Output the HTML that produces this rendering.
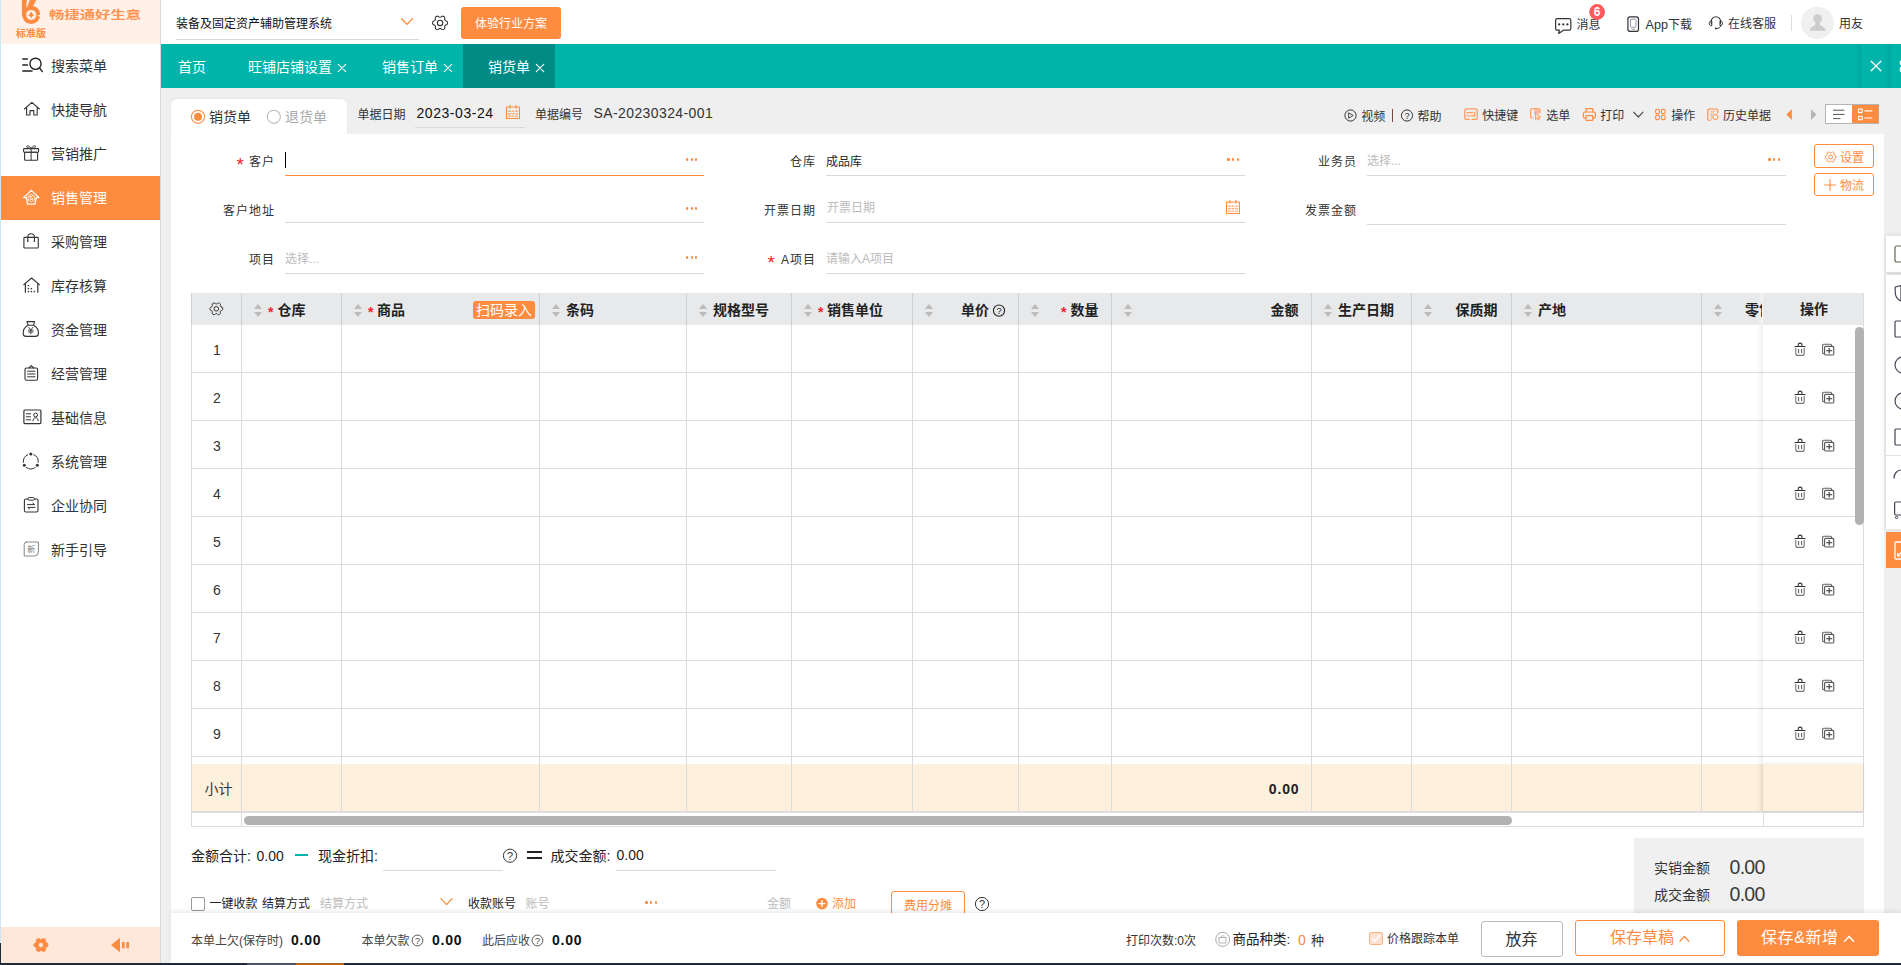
<!DOCTYPE html>
<html lang="zh-CN"><head><meta charset="utf-8"><title>销货单</title>
<style>
*{box-sizing:border-box;margin:0;padding:0}
html,body{width:1901px;height:965px;overflow:hidden;background:#efefef}
body{font-family:"Liberation Sans","Noto Sans CJK SC",sans-serif;font-size:12px;color:#333;position:relative}
.a{position:absolute}
.t{position:absolute;white-space:nowrap;line-height:20px;height:20px}
.r{text-align:right}
.o{color:#fd8b40}
.g{color:#bbb}
svg{position:absolute;overflow:visible}
</style></head>
<body>
<div class="a" style="left:0px;top:0px;width:161px;height:965px;background:#fff;border-right:1px solid #d9d9d9;"></div>
<div class="a" style="left:0px;top:0px;width:160px;height:44px;background:#fff0e8;"></div>
<div class="a" style="left:0px;top:0px;width:1px;height:963px;background:#cfe6f7;"></div>
<div class="t " style="top:5px;font-size:11.5px;left:48.8px;color:#ff9555;font-weight:bold;transform:scaleX(1.335);transform-origin:0 50%;">畅捷通好生意</div>
<div class="t " style="top:24px;font-size:10px;left:16px;color:#fd8b40;font-weight:bold;">标准版</div>
<div class="t " style="top:56px;font-size:14px;left:51px;color:#333;">搜索菜单</div>
<div class="t " style="top:100px;font-size:14px;left:51px;color:#333;">快捷导航</div>
<div class="t " style="top:144px;font-size:14px;left:51px;color:#333;">营销推广</div>
<div class="a" style="left:1px;top:176px;width:159px;height:44px;background:#fd8b40;"></div>
<div class="t " style="top:188px;font-size:14px;left:51px;color:#fff;">销售管理</div>
<div class="t " style="top:232px;font-size:14px;left:51px;color:#333;">采购管理</div>
<div class="t " style="top:276px;font-size:14px;left:51px;color:#333;">库存核算</div>
<div class="t " style="top:320px;font-size:14px;left:51px;color:#333;">资金管理</div>
<div class="t " style="top:364px;font-size:14px;left:51px;color:#333;">经营管理</div>
<div class="t " style="top:408px;font-size:14px;left:51px;color:#333;">基础信息</div>
<div class="t " style="top:452px;font-size:14px;left:51px;color:#333;">系统管理</div>
<div class="t " style="top:496px;font-size:14px;left:51px;color:#333;">企业协同</div>
<div class="t " style="top:540px;font-size:14px;left:51px;color:#333;">新手引导</div>
<div class="a" style="left:1px;top:927px;width:159px;height:36px;background:#ffe7da;"></div>
<div class="a" style="left:0px;top:943px;width:1px;height:22px;background:#1f2a38;"></div>
<div class="a" style="left:161px;top:0px;width:1740px;height:44px;background:#fff;"></div>
<div class="t " style="top:14px;font-size:12px;left:176px;color:#111;">装备及固定资产辅助管理系统</div>
<div class="a" style="left:176px;top:39px;width:243px;height:1px;background:#d9d9d9;"></div>
<div class="a" style="left:461px;top:7px;width:100px;height:32px;background:#fd8b40;border-radius:3px;"></div>
<div class="t " style="top:14px;font-size:12px;left:475px;color:#fff;">体验行业方案</div>
<div class="t " style="top:15px;font-size:12px;left:1576.5px;color:#333;">消息</div>
<div class="t " style="top:15px;font-size:12px;left:1645.5px;color:#333;"><span style="font-size:12.6px">App</span>下载</div>
<div class="t " style="top:14px;font-size:12px;left:1728px;color:#333;">在线客服</div>
<div class="a" style="left:1791px;top:15px;width:1px;height:16px;background:#ddd;"></div>
<div class="a" style="left:1801px;top:7px;width:32px;height:32px;background:#efefef;border-radius:50%;"></div>
<div class="t " style="top:14px;font-size:12px;left:1839px;color:#333;">用友</div>
<div class="a" style="left:161px;top:44px;width:1740px;height:44px;background:#00b4a9;"></div>
<div class="a" style="left:463px;top:44px;width:92px;height:44px;background:#008c84;"></div>
<div class="a" style="left:1854px;top:44px;width:6.5px;height:44px;background:linear-gradient(90deg,rgba(0,0,0,0),rgba(0,0,0,.07));"></div>
<div class="a" style="left:1884px;top:44px;width:6.5px;height:44px;background:linear-gradient(90deg,rgba(0,0,0,0),rgba(0,0,0,.07));"></div>
<div class="t " style="top:57px;font-size:14px;left:178px;color:#fff;">首页</div>
<div class="t " style="top:57px;font-size:14px;left:248px;color:#fff;">旺铺店铺设置</div>
<div class="t " style="top:57px;font-size:14px;left:382px;color:#fff;">销售订单</div>
<div class="t " style="top:57px;font-size:14px;left:488px;color:#fff;">销货单</div>
<div class="a" style="left:171px;top:98.5px;width:176px;height:40px;background:#fff;border-radius:6px 6px 0 0;box-shadow:0 -1px 2px rgba(0,0,0,.04);"></div>
<div class="a" style="left:171px;top:134px;width:1713px;height:800px;background:#fff;"></div>
<div class="t " style="top:107px;font-size:14px;left:209px;color:#333;">销货单</div>
<div class="t " style="top:107px;font-size:14px;left:285px;color:#aaa;">退货单</div>
<div class="t " style="top:104.5px;font-size:12px;left:357.5px;color:#333;">单据日期</div>
<div class="t " style="top:102.5px;font-size:14px;left:416.5px;color:#111;letter-spacing:.55px;">2023-03-24</div>
<div class="a" style="left:415px;top:127px;width:110px;height:1px;background:#d9d9d9;"></div>
<div class="t " style="top:104.5px;font-size:12px;left:535px;color:#333;">单据编号</div>
<div class="t " style="top:102.5px;font-size:14px;left:593.5px;color:#333;letter-spacing:.4px;">SA-20230324-001</div>
<div class="t " style="top:106.5px;font-size:12px;left:1361.3px;color:#333;">视频</div>
<div class="t " style="top:106.5px;font-size:12px;left:1417.6px;color:#333;">帮助</div>
<div class="t " style="top:105.5px;font-size:12px;left:1482.3px;color:#333;">快捷键</div>
<div class="t " style="top:105.5px;font-size:12px;left:1546.3px;color:#333;">选单</div>
<div class="t " style="top:105.5px;font-size:12px;left:1600.3px;color:#333;">打印</div>
<div class="t " style="top:105.5px;font-size:12px;left:1671.2px;color:#333;">操作</div>
<div class="t " style="top:105.5px;font-size:12px;left:1723px;color:#333;">历史单据</div>
<div class="t " style="top:152px;font-size:12px;right:1626px;color:#333;letter-spacing:1px;">客户</div><div class="t " style="top:155.3px;font-size:19px;left:236.5px;color:#f5222d;">*</div>
<div class="a" style="left:285px;top:175px;width:419px;height:1px;background:#fd8b40;"></div>
<div class="a" style="left:285px;top:152px;width:1px;height:16px;background:#000;"></div>
<div class="t " style="top:152px;font-size:12px;right:1085px;color:#333;letter-spacing:1px;">仓库</div>
<div class="a" style="left:826px;top:175px;width:419px;height:1px;background:#d9d9d9;"></div>
<div class="t " style="top:151.5px;font-size:12px;left:826px;color:#222;">成品库</div>
<div class="t " style="top:152px;font-size:12px;right:544px;color:#333;letter-spacing:1px;">业务员</div>
<div class="a" style="left:1367px;top:175px;width:419px;height:1px;background:#d9d9d9;"></div>
<div class="t " style="top:151.2px;font-size:12px;left:1367px;color:#bbb;">选择...</div>
<div class="t " style="top:201px;font-size:12px;right:1626px;color:#333;letter-spacing:1px;">客户地址</div>
<div class="a" style="left:285px;top:222px;width:419px;height:1px;background:#d9d9d9;"></div>
<div class="t " style="top:201px;font-size:12px;right:1085px;color:#333;letter-spacing:1px;">开票日期</div>
<div class="a" style="left:826px;top:222px;width:419px;height:1px;background:#d9d9d9;"></div>
<div class="t " style="top:198px;font-size:12px;left:827px;color:#bbb;">开票日期</div>
<div class="t " style="top:201px;font-size:12px;right:544px;color:#333;letter-spacing:1px;">发票金额</div>
<div class="a" style="left:1367px;top:224px;width:419px;height:1px;background:#d9d9d9;"></div>
<div class="t " style="top:250px;font-size:12px;right:1626px;color:#333;letter-spacing:1px;">项目</div>
<div class="a" style="left:285px;top:273px;width:419px;height:1px;background:#d9d9d9;"></div>
<div class="t " style="top:248.5px;font-size:12px;left:285px;color:#bbb;">选择...</div>
<div class="t " style="top:250px;font-size:12px;right:1085px;color:#333;letter-spacing:1px;">A项目</div><div class="t " style="top:253.3px;font-size:19px;left:767.6px;color:#f5222d;">*</div>
<div class="a" style="left:826px;top:273px;width:419px;height:1px;background:#d9d9d9;"></div>
<div class="t " style="top:248.5px;font-size:12px;left:826px;color:#bbb;">请输入A项目</div>
<div class="a" style="left:685.9px;top:158.4px;width:2.2px;height:2.2px;background:#fd8b40;border-radius:1.1px;"></div><div class="a" style="left:690.5px;top:158.4px;width:2.2px;height:2.2px;background:#fd8b40;border-radius:1.1px;"></div><div class="a" style="left:695.1px;top:158.4px;width:2.2px;height:2.2px;background:#fd8b40;border-radius:1.1px;"></div>
<div class="a" style="left:1227.4px;top:158.4px;width:2.2px;height:2.2px;background:#fd8b40;border-radius:1.1px;"></div><div class="a" style="left:1232px;top:158.4px;width:2.2px;height:2.2px;background:#fd8b40;border-radius:1.1px;"></div><div class="a" style="left:1236.6px;top:158.4px;width:2.2px;height:2.2px;background:#fd8b40;border-radius:1.1px;"></div>
<div class="a" style="left:1768.4px;top:158.4px;width:2.2px;height:2.2px;background:#fd8b40;border-radius:1.1px;"></div><div class="a" style="left:1773px;top:158.4px;width:2.2px;height:2.2px;background:#fd8b40;border-radius:1.1px;"></div><div class="a" style="left:1777.6px;top:158.4px;width:2.2px;height:2.2px;background:#fd8b40;border-radius:1.1px;"></div>
<div class="a" style="left:685.9px;top:207.4px;width:2.2px;height:2.2px;background:#fd8b40;border-radius:1.1px;"></div><div class="a" style="left:690.5px;top:207.4px;width:2.2px;height:2.2px;background:#fd8b40;border-radius:1.1px;"></div><div class="a" style="left:695.1px;top:207.4px;width:2.2px;height:2.2px;background:#fd8b40;border-radius:1.1px;"></div>
<div class="a" style="left:685.9px;top:256.4px;width:2.2px;height:2.2px;background:#fd8b40;border-radius:1.1px;"></div><div class="a" style="left:690.5px;top:256.4px;width:2.2px;height:2.2px;background:#fd8b40;border-radius:1.1px;"></div><div class="a" style="left:695.1px;top:256.4px;width:2.2px;height:2.2px;background:#fd8b40;border-radius:1.1px;"></div>
<div class="a" style="left:1814px;top:144px;width:60px;height:24px;background:#fff;border:1px solid #fd8b40;border-radius:3px;"></div>
<div class="t " style="top:148px;font-size:12px;left:1840px;color:#fd8b40;">设置</div>
<div class="a" style="left:1814px;top:172.5px;width:60px;height:23.5px;background:#fff;border:1px solid #fd8b40;border-radius:3px;"></div>
<div class="t " style="top:176.2px;font-size:12px;left:1840px;color:#fd8b40;">物流</div>
<div class="a" style="left:191px;top:293px;width:1673px;height:32px;background:#e8e9eb;"></div>
<div class="a" style="left:191px;top:372px;width:1673px;height:1px;background:#dcdcdc;"></div>
<div class="a" style="left:191px;top:420px;width:1673px;height:1px;background:#dcdcdc;"></div>
<div class="a" style="left:191px;top:468px;width:1673px;height:1px;background:#dcdcdc;"></div>
<div class="a" style="left:191px;top:516px;width:1673px;height:1px;background:#dcdcdc;"></div>
<div class="a" style="left:191px;top:564px;width:1673px;height:1px;background:#dcdcdc;"></div>
<div class="a" style="left:191px;top:612px;width:1673px;height:1px;background:#dcdcdc;"></div>
<div class="a" style="left:191px;top:660px;width:1673px;height:1px;background:#dcdcdc;"></div>
<div class="a" style="left:191px;top:708px;width:1673px;height:1px;background:#dcdcdc;"></div>
<div class="a" style="left:191px;top:756px;width:1673px;height:1px;background:#dcdcdc;"></div>
<div class="a" style="left:191px;top:764px;width:1673px;height:47px;background:#fdf0dc;"></div>
<div class="a" style="left:191px;top:811px;width:1673px;height:2px;background:#dedede;"></div>
<div class="a" style="left:191px;top:826px;width:1673px;height:1px;background:#dcdcdc;"></div>
<div class="a" style="left:191px;top:293px;width:1px;height:32px;background:#cfcfcf;"></div>
<div class="a" style="left:191px;top:325px;width:1px;height:502px;background:#dcdcdc;"></div>
<div class="a" style="left:241px;top:293px;width:1px;height:32px;background:#cfcfcf;"></div>
<div class="a" style="left:241px;top:325px;width:1px;height:502px;background:#dcdcdc;"></div>
<div class="a" style="left:341px;top:293px;width:1px;height:32px;background:#cfcfcf;"></div>
<div class="a" style="left:341px;top:325px;width:1px;height:486px;background:#dcdcdc;"></div>
<div class="a" style="left:539px;top:293px;width:1px;height:32px;background:#cfcfcf;"></div>
<div class="a" style="left:539px;top:325px;width:1px;height:486px;background:#dcdcdc;"></div>
<div class="a" style="left:686px;top:293px;width:1px;height:32px;background:#cfcfcf;"></div>
<div class="a" style="left:686px;top:325px;width:1px;height:486px;background:#dcdcdc;"></div>
<div class="a" style="left:791px;top:293px;width:1px;height:32px;background:#cfcfcf;"></div>
<div class="a" style="left:791px;top:325px;width:1px;height:486px;background:#dcdcdc;"></div>
<div class="a" style="left:912px;top:293px;width:1px;height:32px;background:#cfcfcf;"></div>
<div class="a" style="left:912px;top:325px;width:1px;height:486px;background:#dcdcdc;"></div>
<div class="a" style="left:1018px;top:293px;width:1px;height:32px;background:#cfcfcf;"></div>
<div class="a" style="left:1018px;top:325px;width:1px;height:486px;background:#dcdcdc;"></div>
<div class="a" style="left:1111px;top:293px;width:1px;height:32px;background:#cfcfcf;"></div>
<div class="a" style="left:1111px;top:325px;width:1px;height:486px;background:#dcdcdc;"></div>
<div class="a" style="left:1311px;top:293px;width:1px;height:32px;background:#cfcfcf;"></div>
<div class="a" style="left:1311px;top:325px;width:1px;height:486px;background:#dcdcdc;"></div>
<div class="a" style="left:1411px;top:293px;width:1px;height:32px;background:#cfcfcf;"></div>
<div class="a" style="left:1411px;top:325px;width:1px;height:486px;background:#dcdcdc;"></div>
<div class="a" style="left:1511px;top:293px;width:1px;height:32px;background:#cfcfcf;"></div>
<div class="a" style="left:1511px;top:325px;width:1px;height:486px;background:#dcdcdc;"></div>
<div class="a" style="left:1701px;top:293px;width:1px;height:32px;background:#cfcfcf;"></div>
<div class="a" style="left:1701px;top:325px;width:1px;height:486px;background:#dcdcdc;"></div>
<div class="a" style="left:241px;top:811px;width:1px;height:15px;background:#dcdcdc;"></div>
<div class="a" style="left:1863px;top:293px;width:1px;height:534px;background:#dcdcdc;"></div>
<div class="a" style="left:1763px;top:293px;width:100px;height:32px;background:#e8e9eb;"></div>
<div class="a" style="left:1758px;top:293px;width:5px;height:32px;background:linear-gradient(90deg,rgba(255,255,255,0),rgba(255,255,255,.55));"></div>
<div class="a" style="left:1757px;top:325px;width:6px;height:486px;background:linear-gradient(90deg,rgba(0,0,0,0),rgba(0,0,0,.06));"></div>
<div class="a" style="left:1763px;top:325px;width:100px;height:439px;background:#fff;"></div>
<div class="a" style="left:1763px;top:764px;width:100px;height:47px;background:#fdf0dc;box-shadow:0 0 3px rgba(0,0,0,.12);"></div>
<div class="a" style="left:1763px;top:812px;width:1px;height:14px;background:#dcdcdc;"></div>
<div class="a" style="left:1763px;top:372px;width:100px;height:1px;background:#dcdcdc;"></div>
<div class="a" style="left:1763px;top:420px;width:100px;height:1px;background:#dcdcdc;"></div>
<div class="a" style="left:1763px;top:468px;width:100px;height:1px;background:#dcdcdc;"></div>
<div class="a" style="left:1763px;top:516px;width:100px;height:1px;background:#dcdcdc;"></div>
<div class="a" style="left:1763px;top:564px;width:100px;height:1px;background:#dcdcdc;"></div>
<div class="a" style="left:1763px;top:612px;width:100px;height:1px;background:#dcdcdc;"></div>
<div class="a" style="left:1763px;top:660px;width:100px;height:1px;background:#dcdcdc;"></div>
<div class="a" style="left:1763px;top:708px;width:100px;height:1px;background:#dcdcdc;"></div>
<div class="a" style="left:1763px;top:756px;width:100px;height:1px;background:#dcdcdc;"></div>
<div class="a" style="left:254px;top:304px;border:4px solid transparent;border-top:0;border-bottom:5px solid #bbb"></div><div class="a" style="left:254px;top:312px;border:4px solid transparent;border-bottom:0;border-top:5px solid #bbb"></div>
<div class="a" style="left:354px;top:304px;border:4px solid transparent;border-top:0;border-bottom:5px solid #bbb"></div><div class="a" style="left:354px;top:312px;border:4px solid transparent;border-bottom:0;border-top:5px solid #bbb"></div>
<div class="a" style="left:552px;top:304px;border:4px solid transparent;border-top:0;border-bottom:5px solid #bbb"></div><div class="a" style="left:552px;top:312px;border:4px solid transparent;border-bottom:0;border-top:5px solid #bbb"></div>
<div class="a" style="left:698.5px;top:304px;border:4px solid transparent;border-top:0;border-bottom:5px solid #bbb"></div><div class="a" style="left:698.5px;top:312px;border:4px solid transparent;border-bottom:0;border-top:5px solid #bbb"></div>
<div class="a" style="left:804px;top:304px;border:4px solid transparent;border-top:0;border-bottom:5px solid #bbb"></div><div class="a" style="left:804px;top:312px;border:4px solid transparent;border-bottom:0;border-top:5px solid #bbb"></div>
<div class="a" style="left:925px;top:304px;border:4px solid transparent;border-top:0;border-bottom:5px solid #bbb"></div><div class="a" style="left:925px;top:312px;border:4px solid transparent;border-bottom:0;border-top:5px solid #bbb"></div>
<div class="a" style="left:1031px;top:304px;border:4px solid transparent;border-top:0;border-bottom:5px solid #bbb"></div><div class="a" style="left:1031px;top:312px;border:4px solid transparent;border-bottom:0;border-top:5px solid #bbb"></div>
<div class="a" style="left:1124px;top:304px;border:4px solid transparent;border-top:0;border-bottom:5px solid #bbb"></div><div class="a" style="left:1124px;top:312px;border:4px solid transparent;border-bottom:0;border-top:5px solid #bbb"></div>
<div class="a" style="left:1324px;top:304px;border:4px solid transparent;border-top:0;border-bottom:5px solid #bbb"></div><div class="a" style="left:1324px;top:312px;border:4px solid transparent;border-bottom:0;border-top:5px solid #bbb"></div>
<div class="a" style="left:1424px;top:304px;border:4px solid transparent;border-top:0;border-bottom:5px solid #bbb"></div><div class="a" style="left:1424px;top:312px;border:4px solid transparent;border-bottom:0;border-top:5px solid #bbb"></div>
<div class="a" style="left:1524px;top:304px;border:4px solid transparent;border-top:0;border-bottom:5px solid #bbb"></div><div class="a" style="left:1524px;top:312px;border:4px solid transparent;border-bottom:0;border-top:5px solid #bbb"></div>
<div class="a" style="left:1714px;top:304px;border:4px solid transparent;border-top:0;border-bottom:5px solid #bbb"></div><div class="a" style="left:1714px;top:312px;border:4px solid transparent;border-bottom:0;border-top:5px solid #bbb"></div>
<div class="t " style="top:302px;font-size:14px;left:268px;color:#f5222d;font-weight:bold;">*</div>
<div class="t " style="top:300px;font-size:14px;left:277.5px;color:#222;font-weight:bold;">仓库</div>
<div class="t " style="top:302px;font-size:14px;left:368px;color:#f5222d;font-weight:bold;">*</div>
<div class="t " style="top:300px;font-size:14px;left:377px;color:#222;font-weight:bold;">商品</div>
<div class="a" style="left:473px;top:301px;width:62px;height:18px;background:#fd8b40;border-radius:3px;"></div>
<div class="t " style="top:300px;font-size:14px;left:476px;color:#fff;">扫码录入</div>
<div class="t " style="top:300px;font-size:14px;left:566px;color:#222;font-weight:bold;">条码</div>
<div class="t " style="top:300px;font-size:14px;left:713px;color:#222;font-weight:bold;">规格型号</div>
<div class="t " style="top:302px;font-size:14px;left:818px;color:#f5222d;font-weight:bold;">*</div>
<div class="t " style="top:300px;font-size:14px;left:827px;color:#222;font-weight:bold;">销售单位</div>
<div class="t " style="top:300px;font-size:14px;right:912px;color:#222;font-weight:bold;">单价</div>
<div class="t " style="top:302px;font-size:14px;left:1061px;color:#f5222d;font-weight:bold;">*</div>
<div class="t " style="top:300px;font-size:14px;right:802.5px;color:#222;font-weight:bold;">数量</div>
<div class="t " style="top:300px;font-size:14px;right:602.5px;color:#222;font-weight:bold;">金额</div>
<div class="t " style="top:300px;font-size:14px;left:1338px;color:#222;font-weight:bold;">生产日期</div>
<div class="t " style="top:300px;font-size:14px;right:403.5px;color:#222;font-weight:bold;">保质期</div>
<div class="t " style="top:300px;font-size:14px;left:1538px;color:#222;font-weight:bold;">产地</div>
<div class="a" style="left:1745px;top:300px;width:17px;height:20px;overflow:hidden"><div class="t " style="top:0px;font-size:14px;left:0px;color:#222;font-weight:bold;">零售价</div></div>
<div class="t " style="top:299px;font-size:14px;left:1800px;color:#222;font-weight:bold;">操作</div>
<div class="t " style="top:339.5px;font-size:14px;left:207px;color:#333;width:20px;text-align:center;">1</div>
<div class="t " style="top:387.5px;font-size:14px;left:207px;color:#333;width:20px;text-align:center;">2</div>
<div class="t " style="top:435.5px;font-size:14px;left:207px;color:#333;width:20px;text-align:center;">3</div>
<div class="t " style="top:483.5px;font-size:14px;left:207px;color:#333;width:20px;text-align:center;">4</div>
<div class="t " style="top:531.5px;font-size:14px;left:207px;color:#333;width:20px;text-align:center;">5</div>
<div class="t " style="top:579.5px;font-size:14px;left:207px;color:#333;width:20px;text-align:center;">6</div>
<div class="t " style="top:627.5px;font-size:14px;left:207px;color:#333;width:20px;text-align:center;">7</div>
<div class="t " style="top:675.5px;font-size:14px;left:207px;color:#333;width:20px;text-align:center;">8</div>
<div class="t " style="top:723.5px;font-size:14px;left:207px;color:#333;width:20px;text-align:center;">9</div>
<div class="t " style="top:779px;font-size:14px;left:204.5px;color:#333;">小计</div>
<div class="t " style="top:778.5px;font-size:14px;right:601.7px;color:#222;font-weight:bold;letter-spacing:.8px;">0.00</div>
<div class="a" style="left:1855px;top:327px;width:9px;height:198px;background:#b2b2b2;border-radius:5px;"></div>
<div class="a" style="left:244px;top:816px;width:1268px;height:9px;background:#b2b2b2;border-radius:5px;"></div>
<div class="t " style="top:846px;font-size:14px;left:191px;color:#222;">金额合计:</div>
<div class="t " style="top:845.5px;font-size:14px;left:256.5px;color:#222;">0.00</div>
<div class="a" style="left:294.5px;top:854px;width:13.5px;height:2px;background:#00b4a9;"></div>
<div class="t " style="top:846px;font-size:14px;left:318px;color:#222;">现金折扣:</div>
<div class="a" style="left:383px;top:870px;width:120px;height:1px;background:#d9d9d9;"></div>
<div class="a" style="left:527px;top:851px;width:14.5px;height:2px;background:#222;"></div>
<div class="a" style="left:527px;top:857px;width:14.5px;height:2px;background:#222;"></div>
<div class="t " style="top:846px;font-size:14px;left:550.5px;color:#222;">成交金额:</div>
<div class="t " style="top:844.5px;font-size:14px;left:616.5px;color:#222;">0.00</div>
<div class="a" style="left:616px;top:870px;width:160px;height:1px;background:#d9d9d9;"></div>
<div class="a" style="left:191px;top:897px;width:13.5px;height:13.5px;background:#fff;border:1px solid #999;border-radius:2px;"></div>
<div class="t " style="top:894px;font-size:12px;left:209.5px;color:#222;">一键收款</div>
<div class="t " style="top:894px;font-size:12px;left:262px;color:#222;">结算方式</div>
<div class="t " style="top:894px;font-size:12px;left:320px;color:#bbb;">结算方式</div>
<div class="t " style="top:894px;font-size:12px;left:468px;color:#222;">收款账号</div>
<div class="t " style="top:894px;font-size:12px;left:525.5px;color:#bbb;">账号</div>
<div class="a" style="left:645.4px;top:901.4px;width:2.2px;height:2.2px;background:#fd8b40;border-radius:1.1px;"></div><div class="a" style="left:650px;top:901.4px;width:2.2px;height:2.2px;background:#fd8b40;border-radius:1.1px;"></div><div class="a" style="left:654.6px;top:901.4px;width:2.2px;height:2.2px;background:#fd8b40;border-radius:1.1px;"></div>
<div class="t " style="top:894px;font-size:12px;left:767px;color:#bbb;">金额</div>
<div class="t " style="top:894px;font-size:12px;left:832px;color:#fd8b40;">添加</div>
<div class="a" style="left:891px;top:890.7px;width:74px;height:30px;background:#fff;border:1px solid #fd8b40;border-radius:3px;"></div>
<div class="t " style="top:895.5px;font-size:12px;left:904px;color:#fd8b40;">费用分摊</div>
<div class="a" style="left:1634px;top:838px;width:230px;height:80px;background:#f0f0f0;"></div>
<div class="t " style="top:858px;font-size:14px;left:1654px;color:#333;">实销金额</div>
<div class="t " style="top:856.5px;font-size:19.5px;left:1729.5px;color:#3a3a3a;letter-spacing:-.7px;">0.00</div>
<div class="t " style="top:885px;font-size:14px;left:1654px;color:#333;">成交金额</div>
<div class="t " style="top:883.5px;font-size:19.5px;left:1729.5px;color:#3a3a3a;letter-spacing:-.7px;">0.00</div>
<div class="a" style="left:171px;top:913px;width:1730px;height:50px;background:#fff;box-shadow:0 -2px 4px rgba(0,0,0,.08);"></div>
<div class="t " style="top:930.5px;font-size:12px;left:191px;color:#444;">本单上欠(保存时)</div>
<div class="t " style="top:930px;font-size:14px;left:291px;color:#111;font-weight:bold;letter-spacing:.8px;">0.00</div>
<div class="t " style="top:930.5px;font-size:12px;left:361.5px;color:#444;">本单欠款</div>
<div class="t " style="top:930px;font-size:14px;left:432px;color:#111;font-weight:bold;letter-spacing:.8px;">0.00</div>
<div class="t " style="top:930.5px;font-size:12px;left:482px;color:#444;">此后应收</div>
<div class="t " style="top:930px;font-size:14px;left:552px;color:#111;font-weight:bold;letter-spacing:.8px;">0.00</div>
<div class="t " style="top:930.5px;font-size:12px;left:1126px;color:#333;">打印次数:0次</div>
<div class="t " style="top:929.5px;font-size:13.5px;left:1232.5px;color:#222;">商品种类:</div>
<div class="t " style="top:929.5px;font-size:14px;left:1298px;color:#fd8b40;">0</div>
<div class="t " style="top:930.5px;font-size:13px;left:1311px;color:#333;">种</div>
<div class="a" style="left:1369px;top:931.5px;width:13.5px;height:13.5px;background:#ffdfcd;border:1px solid #f7b48c;border-radius:2px;"></div>
<div class="t " style="top:928.5px;font-size:12px;left:1387px;color:#333;">价格跟踪本单</div>
<div class="a" style="left:1481px;top:921px;width:82px;height:36px;background:#fff;border:1px solid #bbb;border-radius:3px;"></div>
<div class="t " style="top:929.5px;font-size:16px;left:1505.5px;color:#333;">放弃</div>
<div class="a" style="left:1575px;top:920px;width:150px;height:36px;background:#fff;border:1px solid #fd8b40;border-radius:3px;"></div>
<div class="t " style="top:928px;font-size:16px;left:1610px;color:#fd8b40;">保存草稿</div>
<div class="a" style="left:1737px;top:920px;width:142px;height:36px;background:#fd8b40;border-radius:3px;"></div>
<div class="t " style="top:928px;font-size:16px;left:1761px;color:#fff;letter-spacing:.6px;">保存&amp;新增</div>
<div class="a" style="left:1886px;top:236px;width:20px;height:36px;background:#fff;box-shadow:0 0 6px rgba(0,0,0,.12);"></div>
<div class="a" style="left:1886px;top:275px;width:20px;height:254px;background:#fff;box-shadow:0 0 6px rgba(0,0,0,.12);"></div>
<div class="a" style="left:1886px;top:455px;width:20px;height:1px;background:#e2e2e2;"></div>
<div class="a" style="left:1886px;top:532px;width:20px;height:36px;background:#fd8b40;"></div>
<div class="a" style="left:0px;top:963px;width:1901px;height:2px;background:#1f2a38;"></div>
<div class="a" style="left:247px;top:963px;width:49px;height:2px;background:#4b5563;"></div>
<div class="a" style="left:296px;top:963px;width:48px;height:2px;background:#b5651d;"></div>
<svg class="a" style="left:0;top:0" width="1901" height="965" viewBox="0 0 1901 965"><circle cx="31.2" cy="14.8" r="9.1" fill="#fd8b40" stroke="#fd8b40" stroke-width="0"/>
<path d="M21.9 0 H26.9 L26.3 6 V15 H21.9 Z" fill="#fd8b40" stroke="#fd8b40" stroke-width="0" stroke-linecap="round" stroke-linejoin="round" />
<path d="M29.8 0 H36.3 L32.9 6.4 L26.6 9 Z" fill="#fd8b40" stroke="#fd8b40" stroke-width="0" stroke-linecap="round" stroke-linejoin="round" />
<circle cx="31.2" cy="14.9" r="5" fill="#fff0e8" stroke="#fff0e8" stroke-width="0"/>
<path d="M40.6 14.4 L37.2 15.7 L40.6 17 Z" fill="#fff0e8" stroke="#fff0e8" stroke-width="0" stroke-linecap="round" stroke-linejoin="round" />
<path d="M31.2 11.6 Q31.9 14.2 34.4 14.9 Q31.9 15.6 31.2 18.2 Q30.5 15.6 28 14.9 Q30.5 14.2 31.2 11.6 Z" fill="#fd8b40" stroke="#fd8b40" stroke-width="0" stroke-linecap="round" stroke-linejoin="round" />
<path d="M22.8 59 h4.6 M22.8 65 h4.6 M22.8 71 h9.2" fill="none" stroke="#222" stroke-width="1.5" stroke-linecap="round" stroke-linejoin="round" stroke-linecap="butt"/>
<circle cx="35.5" cy="63.8" r="5.6" fill="none" stroke="#222" stroke-width="1.4"/>
<path d="M39.6 68 L42.4 71.6" fill="none" stroke="#222" stroke-width="1.4" stroke-linecap="round" stroke-linejoin="round" />
<path d="M24.4 109 L31.9 102.4 L39.4 109 M26.6 107.6 V115 H30 V110.6 H33.8 V115 H37.2 V107.6" fill="none" stroke="#333" stroke-width="1.1" stroke-linecap="round" stroke-linejoin="round" />
<rect x="24.6" y="152.2" width="13" height="8" rx="0.8" fill="none" stroke="#333" stroke-width="1.1"/>
<rect x="23.6" y="148.6" width="15" height="3.6" rx="0.6" fill="none" stroke="#333" stroke-width="1.1"/>
<path d="M31.1 148.6 V160" fill="none" stroke="#333" stroke-width="1" stroke-linecap="round" stroke-linejoin="round" />
<path d="M31.1 148.4 C29 145 25.6 145.2 27 147.4 C27.8 148.3 29.8 148.4 31.1 148.4 C32.4 148.4 34.4 148.3 35.2 147.4 C36.6 145.2 33.2 145 31.1 148.4" fill="none" stroke="#333" stroke-width="1" stroke-linecap="round" stroke-linejoin="round" />
<path d="M31.3 190.4 L23.6 197.6 H26.4 L27.6 204.2 H35 L36.2 197.6 H39 Z" fill="none" stroke="#fff" stroke-width="1.3" stroke-linecap="round" stroke-linejoin="round" />
<circle cx="31.3" cy="198" r="3.5" fill="none" stroke="#fff" stroke-width="0.8"/>
<text x="31.3" y="200.2" font-size="6" fill="#fff" font-weight="bold" text-anchor="middle" font-family="Liberation Sans, Noto Sans CJK SC, sans-serif">S</text>
<rect x="23.9" y="237.4" width="14.4" height="10.6" rx="0.8" fill="none" stroke="#333" stroke-width="1.1"/>
<path d="M27.8 241 V237 A3.3 3.3 0 0 1 34.4 237 V241" fill="none" stroke="#333" stroke-width="1.1" stroke-linecap="round" stroke-linejoin="round" />
<circle cx="27.8" cy="241.2" r="0.7" fill="#333" stroke="#333" stroke-width="0"/>
<circle cx="34.4" cy="241.2" r="0.7" fill="#333" stroke="#333" stroke-width="0"/>
<path d="M23.8 284.6 L31.6 278 L39.4 284.6 M25.4 283.6 V292.2 M37.8 283.6 V292.2" fill="none" stroke="#333" stroke-width="1.2" stroke-linecap="round" stroke-linejoin="round" />
<rect x="27.7" y="284.9" width="1.4" height="1.4" rx="0" fill="#333" stroke="#333" stroke-width="0"/>
<rect x="27.7" y="287.9" width="1.4" height="1.4" rx="0" fill="#333" stroke="#333" stroke-width="0"/>
<rect x="30.7" y="287.9" width="1.4" height="1.4" rx="0" fill="#333" stroke="#333" stroke-width="0"/>
<rect x="27.7" y="290.9" width="1.4" height="1.4" rx="0" fill="#333" stroke="#333" stroke-width="0"/>
<rect x="30.7" y="290.9" width="1.4" height="1.4" rx="0" fill="#333" stroke="#333" stroke-width="0"/>
<rect x="33.7" y="290.9" width="1.4" height="1.4" rx="0" fill="#333" stroke="#333" stroke-width="0"/>
<path d="M28 325.2 L27 321.6 H34.6 L33.6 325.2 C36.8 327 38.6 330.4 38.4 333.6 C38.3 335.6 37.2 336.4 35.4 336.4 H26.2 C24.4 336.4 23.3 335.6 23.2 333.6 C23 330.4 24.8 327 28 325.2 Z M28 325.2 H33.6" fill="none" stroke="#333" stroke-width="1.1" stroke-linecap="round" stroke-linejoin="round" />
<path d="M28.8 327.4 L30.8 330 L32.8 327.4 M28.4 330.2 H33.2 M28.4 332 H33.2 M30.8 330 V334" fill="none" stroke="#333" stroke-width="0.9" stroke-linecap="round" stroke-linejoin="round" />
<rect x="25" y="368" width="12.6" height="12.2" rx="1.4" fill="none" stroke="#333" stroke-width="1.1"/>
<path d="M29 368 L31.3 365.6 L33.6 368" fill="none" stroke="#333" stroke-width="1.1" stroke-linecap="round" stroke-linejoin="round" />
<path d="M27.6 371.2 H35 M27.6 374 H35 M27.6 376.8 H35" fill="none" stroke="#333" stroke-width="1" stroke-linecap="round" stroke-linejoin="round" />
<rect x="23.9" y="410" width="17" height="13.6" rx="1" fill="none" stroke="#333" stroke-width="1.2"/>
<path d="M26.4 413.8 H30.6 M26.4 416.8 H30.6 M26.4 419.8 H30.6" fill="none" stroke="#333" stroke-width="1" stroke-linecap="round" stroke-linejoin="round" />
<circle cx="35.6" cy="415" r="1.9" fill="none" stroke="#333" stroke-width="1"/>
<path d="M33 420.8 C33 416.6 38.2 416.6 38.2 420.8" fill="none" stroke="#333" stroke-width="1" stroke-linecap="round" stroke-linejoin="round" />
<path d="M33.85 454.65 A7.5 7.5 0 0 1 38.26 462.28M35.21 467.57 A7.5 7.5 0 0 1 26.39 467.57M23.34 462.28 A7.5 7.5 0 0 1 27.75 454.65" fill="none" stroke="#333" stroke-width="1" stroke-linecap="round" stroke-linejoin="round" />
<circle cx="30.8" cy="454" r="1.5" fill="#333" stroke="#333" stroke-width="0"/>
<circle cx="24.3" cy="465.25" r="1.5" fill="#333" stroke="#333" stroke-width="0"/>
<circle cx="37.3" cy="465.25" r="1.5" fill="#333" stroke="#333" stroke-width="0"/>
<rect x="24.4" y="499" width="13.6" height="13" rx="1.6" fill="none" stroke="#333" stroke-width="1.1"/>
<rect x="27.8" y="497.6" width="6.8" height="2.6" rx="1.3" fill="#fff" stroke="#333" stroke-width="1"/>
<path d="M27.4 504.6 H34.6 L32.8 503 M35 507.4 H27.8 L29.6 509" fill="none" stroke="#333" stroke-width="1" stroke-linecap="round" stroke-linejoin="round" />
<path d="M26.6 542 H38.4 V552 A4 4 0 0 1 34.4 556 H24.2 V544.4 A2.4 2.4 0 0 1 26.6 542 Z" fill="none" stroke="#888" stroke-width="1" stroke-linecap="round" stroke-linejoin="round" />
<text x="31.3" y="552" font-size="8" fill="#777" font-weight="normal" text-anchor="middle" font-family="Liberation Sans, Noto Sans CJK SC, sans-serif">新</text>
<path d="M47.10 942.90A2.55 2.55 0 0 1 47.10 947.10A1.33 1.33 0 0 0 45.87 949.23A2.55 2.55 0 0 1 42.23 951.33A1.33 1.33 0 0 0 39.77 951.33A2.55 2.55 0 0 1 36.13 949.23A1.33 1.33 0 0 0 34.90 947.10A2.55 2.55 0 0 1 34.90 942.90A1.33 1.33 0 0 0 36.13 940.77A2.55 2.55 0 0 1 39.77 938.67A1.33 1.33 0 0 0 42.23 938.67A2.55 2.55 0 0 1 45.87 940.77A1.33 1.33 0 0 0 47.10 942.90ZM43.50 945.00 A2.50 2.50 0 1 0 38.50 945.00 A2.50 2.50 0 1 0 43.50 945.00 Z" fill="#fd8b40" stroke="#fd8b40" stroke-width="0.6" stroke-linecap="round" stroke-linejoin="round" fill-rule="evenodd"/>
<path d="M111 945 L120 937.8 V952.2 Z" fill="#fd8b40" stroke="#fd8b40" stroke-width="0" stroke-linecap="round" stroke-linejoin="round" />
<rect x="122" y="942" width="2.6" height="6.3" rx="0" fill="#fd8b40" stroke="#fd8b40" stroke-width="0"/>
<rect x="126.3" y="942" width="2.7" height="6.3" rx="0" fill="#fd8b40" stroke="#fd8b40" stroke-width="0"/>
<path d="M401.6 18.8 L407 24.4 L412.4 18.8" fill="none" stroke="#fd8b40" stroke-width="1.3" stroke-linecap="round" stroke-linejoin="round" />
<path d="M446.44 21.04A2.10 2.10 0 0 1 446.44 24.76A1.90 1.90 0 0 0 444.85 27.50A2.10 2.10 0 0 1 441.64 29.36A1.90 1.90 0 0 0 438.46 29.36A2.10 2.10 0 0 1 435.25 27.50A1.90 1.90 0 0 0 433.66 24.76A2.10 2.10 0 0 1 433.66 21.04A1.90 1.90 0 0 0 435.25 18.30A2.10 2.10 0 0 1 438.46 16.44A1.90 1.90 0 0 0 441.64 16.44A2.10 2.10 0 0 1 444.85 18.30A1.90 1.90 0 0 0 446.44 21.04Z" fill="none" stroke="#333" stroke-width="1.1" stroke-linecap="round" stroke-linejoin="round" />
<circle cx="440.05" cy="22.9" r="2.7" fill="none" stroke="#333" stroke-width="1.1"/>
<path d="M1557.2 18.6 H1569.2 A1.6 1.6 0 0 1 1570.8 20.2 V28.6 A1.6 1.6 0 0 1 1569.2 30.2 H1563.4 L1558.8 33.4 L1559.4 30.2 H1557.2 A1.6 1.6 0 0 1 1555.6 28.6 V20.2 A1.6 1.6 0 0 1 1557.2 18.6 Z" fill="none" stroke="#333" stroke-width="1.2" stroke-linecap="round" stroke-linejoin="round" />
<circle cx="1559.2" cy="24.4" r="1.15" fill="#333" stroke="#333" stroke-width="0"/>
<circle cx="1563.3" cy="24.4" r="1.15" fill="#333" stroke="#333" stroke-width="0"/>
<circle cx="1567.4" cy="24.4" r="1.15" fill="#333" stroke="#333" stroke-width="0"/>
<circle cx="1597.1" cy="12" r="7.9" fill="#ff5a5f" stroke="#ff5a5f" stroke-width="0"/>
<text x="1597.1" y="16.3" font-size="12" fill="#fff" font-weight="bold" text-anchor="middle" font-family="Liberation Sans, Noto Sans CJK SC, sans-serif">6</text>
<rect x="1627.9" y="16.8" width="10.6" height="14.6" rx="2.2" fill="none" stroke="#333" stroke-width="1.2"/>
<rect x="1630.4" y="19.2" width="5.6" height="8" rx="0.6" fill="none" stroke="#9a93b5" stroke-width="1"/>
<path d="M1631.8 29.2 H1634.6" fill="none" stroke="#999" stroke-width="1" stroke-linecap="round" stroke-linejoin="round" />
<path d="M1711.2 23.6 V21.4 A4.7 4.7 0 0 1 1720.6 21.4 V23.6" fill="none" stroke="#333" stroke-width="1.1" stroke-linecap="round" stroke-linejoin="round" />
<path d="M1711.4 20.8 C1708.4 20.8 1708.4 25.8 1711.4 25.8 Z M1720.4 20.8 C1723.4 20.8 1723.4 25.8 1720.4 25.8 Z" fill="none" stroke="#333" stroke-width="1" stroke-linecap="round" stroke-linejoin="round" />
<path d="M1720.6 25.8 C1720.6 27.8 1718.6 28.4 1716.6 28.4" fill="none" stroke="#333" stroke-width="1" stroke-linecap="round" stroke-linejoin="round" />
<circle cx="1715.8" cy="28.4" r="1" fill="#333" stroke="#333" stroke-width="0"/>
<circle cx="1817.7" cy="22.8" r="16" fill="#f0f0f0" stroke="#f0f0f0" stroke-width="0"/>
<circle cx="1817.6" cy="18.6" r="4.4" fill="#ccc" stroke="#ccc" stroke-width="0"/>
<path d="M1809.8 30.8 C1809.8 27.6 1813 26.2 1815.4 25 L1815.4 22 H1819.8 L1819.8 25 C1822.2 26.2 1825.6 27.6 1825.6 30.8 Z" fill="#ccc" stroke="#ccc" stroke-width="0" stroke-linecap="round" stroke-linejoin="round" />
<path d="M338.3 64.3 L345.7 71.7 M345.7 64.3 L338.3 71.7" fill="none" stroke="#fff" stroke-width="1.2" stroke-linecap="round" stroke-linejoin="round" />
<path d="M444.3 64.3 L451.7 71.7 M451.7 64.3 L444.3 71.7" fill="none" stroke="#fff" stroke-width="1.2" stroke-linecap="round" stroke-linejoin="round" />
<path d="M536.3 64.3 L543.7 71.7 M543.7 64.3 L536.3 71.7" fill="none" stroke="#fff" stroke-width="1.2" stroke-linecap="round" stroke-linejoin="round" />
<path d="M1871.2 61.2 L1880.8 70.8 M1880.8 61.2 L1871.2 70.8" fill="none" stroke="#fff" stroke-width="1.3" stroke-linecap="round" stroke-linejoin="round" />
<rect x="1900.3" y="61" width="6" height="3.4" rx="1" fill="none" stroke="#fff" stroke-width="1.2"/>
<rect x="1900.3" y="67.6" width="6" height="4" rx="1" fill="none" stroke="#fff" stroke-width="1.2"/>
<circle cx="198" cy="116.8" r="6.6" fill="#fff" stroke="#fd8b40" stroke-width="1.1"/>
<circle cx="198" cy="116.8" r="4" fill="#fd8b40" stroke="#fd8b40" stroke-width="0"/>
<circle cx="273.8" cy="116.8" r="6.6" fill="#fff" stroke="#bbb" stroke-width="1.1"/>
<rect x="506.5" y="107" width="13" height="11.5" rx="0.5" fill="none" stroke="#fd8b40" stroke-width="1.1"/>
<path d="M510 105.3 v3 M516 105.3 v3" fill="none" stroke="#fd8b40" stroke-width="1.1" stroke-linecap="round" stroke-linejoin="round" />
<path d="M508.5 111.2 h9" fill="none" stroke="#fd8b40" stroke-width="0.9" stroke-linecap="round" stroke-linejoin="round" stroke-dasharray="2 1.5" stroke-linecap="butt"/>
<path d="M508.5 113.8 h9" fill="none" stroke="#fd8b40" stroke-width="0.9" stroke-linecap="round" stroke-linejoin="round" stroke-dasharray="2 1.5" stroke-linecap="butt"/>
<path d="M508.5 116.2 h9" fill="none" stroke="#fd8b40" stroke-width="0.9" stroke-linecap="round" stroke-linejoin="round" stroke-dasharray="2 1.5" stroke-linecap="butt"/>
<circle cx="1350.5" cy="115.5" r="5.6" fill="none" stroke="#333" stroke-width="1"/>
<path d="M1349 113 L1353.2 115.5 L1349 118 Z" fill="none" stroke="#333" stroke-width="0.9" stroke-linecap="round" stroke-linejoin="round" />
<rect x="1392" y="109" width="1" height="13" fill="#7a4a3a"/>
<circle cx="1407" cy="115.5" r="5.6" fill="none" stroke="#333" stroke-width="1"/>
<text x="1407" y="118.86" font-size="9.24" fill="#333" font-weight="normal" text-anchor="middle" font-family="Liberation Sans, Noto Sans CJK SC, sans-serif">?</text>
<path d="M1469.2 119.4 H1466.8 A2 2 0 0 1 1464.8 117.4 V110.8 A2 2 0 0 1 1466.8 108.8 H1475.3 A2 2 0 0 1 1477.3 110.8 V117.4 A2 2 0 0 1 1475.3 119.4 H1472" fill="none" stroke="#ff9a5a" stroke-width="1.2" stroke-linecap="round" stroke-linejoin="round" />
<path d="M1467 112.7 H1473.2" fill="none" stroke="#ff9a5a" stroke-width="1.2" stroke-linecap="round" stroke-linejoin="round" stroke-dasharray="1.2 1" stroke-linecap="butt"/>
<path d="M1467 115.8 H1469.4" fill="none" stroke="#ff9a5a" stroke-width="1.2" stroke-linecap="round" stroke-linejoin="round" stroke-dasharray="1.2 1" stroke-linecap="butt"/>
<path d="M1474.7 112.2 V115.8 H1471" fill="none" stroke="#ff9a5a" stroke-width="1.2" stroke-linecap="round" stroke-linejoin="round" stroke-linecap="butt"/>
<rect x="1534.2" y="109.4" width="4.8" height="4.2" rx="0.5" fill="#ffb59a" stroke="#ffb59a" stroke-width="0"/>
<path d="M1533 118 H1532.4 A1.8 1.8 0 0 1 1530.6 116.2 V110.4 A1.8 1.8 0 0 1 1532.4 108.6 H1538.2 A1.8 1.8 0 0 1 1540 110.4 V113" fill="none" stroke="#ff9a5a" stroke-width="1.2" stroke-linecap="round" stroke-linejoin="round" />
<path d="M1535.4 113.4 L1535.6 119.6 L1537.2 118.2 L1538.4 120.2 L1539.4 119.6 L1538.2 117.6 L1540.4 117.2 Z" fill="#ffd9c4" stroke="#fd8b40" stroke-width="0.8" stroke-linecap="round" stroke-linejoin="round" />
<path d="M1586 112 V108.6 H1592.8 V112" fill="none" stroke="#fd8b40" stroke-width="1.2" stroke-linecap="round" stroke-linejoin="round" />
<rect x="1583.4" y="112" width="12" height="6.2" rx="1.6" fill="none" stroke="#fd8b40" stroke-width="1.2"/>
<rect x="1586" y="115.6" width="6.8" height="4.8" rx="0.4" fill="#efefef" stroke="#fd8b40" stroke-width="1.2"/>
<path d="M1633.6 112.2 L1638.3 117 L1643 112.2" fill="none" stroke="#444" stroke-width="1.1" stroke-linecap="round" stroke-linejoin="round" />
<rect x="1655.6" y="109.4" width="3.8" height="4.2" rx="1.3" fill="none" stroke="#fd8b40" stroke-width="1.1"/>
<rect x="1661.4" y="109.4" width="3.8" height="4.2" rx="1.3" fill="none" stroke="#fd8b40" stroke-width="1.1"/>
<rect x="1655.6" y="115.4" width="3.8" height="4.2" rx="1.3" fill="none" stroke="#fd8b40" stroke-width="1.1"/>
<rect x="1661.4" y="115.4" width="3.8" height="4.2" rx="1.3" fill="none" stroke="#fd8b40" stroke-width="1.1"/>
<path d="M1709.6 120.2 H1708.8 A1 1 0 0 1 1707.8 119.2 V110 A1 1 0 0 1 1708.8 109 H1716.8 A1 1 0 0 1 1717.8 110 V113" fill="none" stroke="#fd8b40" stroke-width="1.1" stroke-linecap="round" stroke-linejoin="round" />
<path d="M1710.6 111.6 H1715 M1710.6 114 H1712.6" fill="none" stroke="#ffb58a" stroke-width="1" stroke-linecap="round" stroke-linejoin="round" />
<circle cx="1715.4" cy="117" r="2.6" fill="none" stroke="#fd8b40" stroke-width="1"/>
<path d="M1711.2 120.4 V113.2 H1713" fill="none" stroke="#ffb58a" stroke-width="1" stroke-linecap="round" stroke-linejoin="round" />
<path d="M1786.4 114.6 L1791.8 109.2 V120 Z" fill="#fd8b40" stroke="#fd8b40" stroke-width="0" stroke-linecap="round" stroke-linejoin="round" />
<path d="M1816.4 114.6 L1811 109.2 V120 Z" fill="#b5b5b5" stroke="#b5b5b5" stroke-width="0" stroke-linecap="round" stroke-linejoin="round" />
<rect x="1825.5" y="104.5" width="53" height="19" rx="0" fill="#fff" stroke="#b5b5b5" stroke-width="1"/>
<rect x="1852" y="105" width="26.5" height="18" rx="0" fill="#fd8b40" stroke="#fd8b40" stroke-width="0"/>
<path d="M1833.4 110.2 H1844 M1833.4 114.4 H1844 M1833.4 118.6 H1840" fill="none" stroke="#555" stroke-width="1" stroke-linecap="round" stroke-linejoin="round" stroke-linecap="butt"/>
<rect x="1858.6" y="109" width="3.6" height="3.6" rx="0.3" fill="none" stroke="#fff" stroke-width="1.1"/>
<rect x="1858.6" y="116.2" width="3.6" height="3.6" rx="0.3" fill="none" stroke="#fff" stroke-width="1.1"/>
<path d="M1864.8 110.8 H1872 M1864.8 118 H1872" fill="none" stroke="#fff" stroke-width="1.2" stroke-linecap="round" stroke-linejoin="round" stroke-linecap="butt"/>
<rect x="1226.5" y="202" width="13" height="11.5" rx="0.5" fill="none" stroke="#fd8b40" stroke-width="1.1"/>
<path d="M1230 200.3 v3 M1236 200.3 v3" fill="none" stroke="#fd8b40" stroke-width="1.1" stroke-linecap="round" stroke-linejoin="round" />
<path d="M1228.5 206.2 h9" fill="none" stroke="#fd8b40" stroke-width="0.9" stroke-linecap="round" stroke-linejoin="round" stroke-dasharray="2 1.5" stroke-linecap="butt"/>
<path d="M1228.5 208.8 h9" fill="none" stroke="#fd8b40" stroke-width="0.9" stroke-linecap="round" stroke-linejoin="round" stroke-dasharray="2 1.5" stroke-linecap="butt"/>
<path d="M1228.5 211.2 h9" fill="none" stroke="#fd8b40" stroke-width="0.9" stroke-linecap="round" stroke-linejoin="round" stroke-dasharray="2 1.5" stroke-linecap="butt"/>
<path d="M1835.31 155.63A1.57 1.57 0 0 1 1835.31 158.37A1.37 1.37 0 0 0 1834.14 160.39A1.57 1.57 0 0 1 1831.77 161.76A1.37 1.37 0 0 0 1829.43 161.76A1.57 1.57 0 0 1 1827.06 160.39A1.37 1.37 0 0 0 1825.89 158.37A1.57 1.57 0 0 1 1825.89 155.63A1.37 1.37 0 0 0 1827.06 153.61A1.57 1.57 0 0 1 1829.43 152.24A1.37 1.37 0 0 0 1831.77 152.24A1.57 1.57 0 0 1 1834.14 153.61A1.37 1.37 0 0 0 1835.31 155.63Z" fill="none" stroke="#fd8b40" stroke-width="1" stroke-linecap="round" stroke-linejoin="round" />
<circle cx="1830.6" cy="157" r="1.9" fill="none" stroke="#fd8b40" stroke-width="1"/>
<path d="M1824.6 185 H1835.4 M1830 179.6 V190.4" fill="none" stroke="#fd8b40" stroke-width="1.1" stroke-linecap="round" stroke-linejoin="round" stroke-linecap="butt"/>
<path d="M221.82 307.20A1.80 1.80 0 0 1 221.82 310.40A1.59 1.59 0 0 0 220.45 312.78A1.80 1.80 0 0 1 217.67 314.38A1.59 1.59 0 0 0 214.93 314.38A1.80 1.80 0 0 1 212.15 312.78A1.59 1.59 0 0 0 210.78 310.40A1.80 1.80 0 0 1 210.78 307.20A1.59 1.59 0 0 0 212.15 304.82A1.80 1.80 0 0 1 214.93 303.22A1.59 1.59 0 0 0 217.67 303.22A1.80 1.80 0 0 1 220.45 304.82A1.59 1.59 0 0 0 221.82 307.20Z" fill="none" stroke="#333" stroke-width="1" stroke-linecap="round" stroke-linejoin="round" />
<circle cx="216.3" cy="308.8" r="2.3" fill="none" stroke="#333" stroke-width="1"/>
<circle cx="999" cy="310.6" r="5.6" fill="none" stroke="#222" stroke-width="1.1"/>
<text x="999" y="313.96" font-size="9.24" fill="#222" font-weight="normal" text-anchor="middle" font-family="Liberation Sans, Noto Sans CJK SC, sans-serif">?</text>
<path d="M1795 346.5 H1805 M1798.2 346.3 V345 A1.9 1.9 0 0 1 1802 345 V346.3" fill="none" stroke="#333" stroke-width="1.1" stroke-linecap="round" stroke-linejoin="round" />
<path d="M1795.8 348.2 V353.4 A2 2 0 0 0 1797.8 355.4 H1802.2 A2 2 0 0 0 1804.2 353.4 V348.2" fill="none" stroke="#777" stroke-width="1.1" stroke-linecap="round" stroke-linejoin="round" />
<path d="M1798.6 349.4 V352.8 M1801.6 349.4 V352.8" fill="none" stroke="#555" stroke-width="1" stroke-linecap="round" stroke-linejoin="round" />
<path d="M1824.4 353.6 H1823.6 A1 1 0 0 1 1822.6 352.6 V345.2 A1 1 0 0 1 1823.6 344.2 H1830.6 A1 1 0 0 1 1831.6 345.2 V346" fill="none" stroke="#666" stroke-width="1.1" stroke-linecap="round" stroke-linejoin="round" />
<rect x="1824.6" y="346.4" width="9.2" height="8.6" rx="1.2" fill="#fff" stroke="#555" stroke-width="1.1"/>
<path d="M1826.6 350.7 H1831.8 M1829.2 348.4 V353" fill="none" stroke="#333" stroke-width="1.1" stroke-linecap="round" stroke-linejoin="round" stroke-linecap="butt"/>
<path d="M1795 394.5 H1805 M1798.2 394.3 V393 A1.9 1.9 0 0 1 1802 393 V394.3" fill="none" stroke="#333" stroke-width="1.1" stroke-linecap="round" stroke-linejoin="round" />
<path d="M1795.8 396.2 V401.4 A2 2 0 0 0 1797.8 403.4 H1802.2 A2 2 0 0 0 1804.2 401.4 V396.2" fill="none" stroke="#777" stroke-width="1.1" stroke-linecap="round" stroke-linejoin="round" />
<path d="M1798.6 397.4 V400.8 M1801.6 397.4 V400.8" fill="none" stroke="#555" stroke-width="1" stroke-linecap="round" stroke-linejoin="round" />
<path d="M1824.4 401.6 H1823.6 A1 1 0 0 1 1822.6 400.6 V393.2 A1 1 0 0 1 1823.6 392.2 H1830.6 A1 1 0 0 1 1831.6 393.2 V394" fill="none" stroke="#666" stroke-width="1.1" stroke-linecap="round" stroke-linejoin="round" />
<rect x="1824.6" y="394.4" width="9.2" height="8.6" rx="1.2" fill="#fff" stroke="#555" stroke-width="1.1"/>
<path d="M1826.6 398.7 H1831.8 M1829.2 396.4 V401" fill="none" stroke="#333" stroke-width="1.1" stroke-linecap="round" stroke-linejoin="round" stroke-linecap="butt"/>
<path d="M1795 442.5 H1805 M1798.2 442.3 V441 A1.9 1.9 0 0 1 1802 441 V442.3" fill="none" stroke="#333" stroke-width="1.1" stroke-linecap="round" stroke-linejoin="round" />
<path d="M1795.8 444.2 V449.4 A2 2 0 0 0 1797.8 451.4 H1802.2 A2 2 0 0 0 1804.2 449.4 V444.2" fill="none" stroke="#777" stroke-width="1.1" stroke-linecap="round" stroke-linejoin="round" />
<path d="M1798.6 445.4 V448.8 M1801.6 445.4 V448.8" fill="none" stroke="#555" stroke-width="1" stroke-linecap="round" stroke-linejoin="round" />
<path d="M1824.4 449.6 H1823.6 A1 1 0 0 1 1822.6 448.6 V441.2 A1 1 0 0 1 1823.6 440.2 H1830.6 A1 1 0 0 1 1831.6 441.2 V442" fill="none" stroke="#666" stroke-width="1.1" stroke-linecap="round" stroke-linejoin="round" />
<rect x="1824.6" y="442.4" width="9.2" height="8.6" rx="1.2" fill="#fff" stroke="#555" stroke-width="1.1"/>
<path d="M1826.6 446.7 H1831.8 M1829.2 444.4 V449" fill="none" stroke="#333" stroke-width="1.1" stroke-linecap="round" stroke-linejoin="round" stroke-linecap="butt"/>
<path d="M1795 490.5 H1805 M1798.2 490.3 V489 A1.9 1.9 0 0 1 1802 489 V490.3" fill="none" stroke="#333" stroke-width="1.1" stroke-linecap="round" stroke-linejoin="round" />
<path d="M1795.8 492.2 V497.4 A2 2 0 0 0 1797.8 499.4 H1802.2 A2 2 0 0 0 1804.2 497.4 V492.2" fill="none" stroke="#777" stroke-width="1.1" stroke-linecap="round" stroke-linejoin="round" />
<path d="M1798.6 493.4 V496.8 M1801.6 493.4 V496.8" fill="none" stroke="#555" stroke-width="1" stroke-linecap="round" stroke-linejoin="round" />
<path d="M1824.4 497.6 H1823.6 A1 1 0 0 1 1822.6 496.6 V489.2 A1 1 0 0 1 1823.6 488.2 H1830.6 A1 1 0 0 1 1831.6 489.2 V490" fill="none" stroke="#666" stroke-width="1.1" stroke-linecap="round" stroke-linejoin="round" />
<rect x="1824.6" y="490.4" width="9.2" height="8.6" rx="1.2" fill="#fff" stroke="#555" stroke-width="1.1"/>
<path d="M1826.6 494.7 H1831.8 M1829.2 492.4 V497" fill="none" stroke="#333" stroke-width="1.1" stroke-linecap="round" stroke-linejoin="round" stroke-linecap="butt"/>
<path d="M1795 538.5 H1805 M1798.2 538.3 V537 A1.9 1.9 0 0 1 1802 537 V538.3" fill="none" stroke="#333" stroke-width="1.1" stroke-linecap="round" stroke-linejoin="round" />
<path d="M1795.8 540.2 V545.4 A2 2 0 0 0 1797.8 547.4 H1802.2 A2 2 0 0 0 1804.2 545.4 V540.2" fill="none" stroke="#777" stroke-width="1.1" stroke-linecap="round" stroke-linejoin="round" />
<path d="M1798.6 541.4 V544.8 M1801.6 541.4 V544.8" fill="none" stroke="#555" stroke-width="1" stroke-linecap="round" stroke-linejoin="round" />
<path d="M1824.4 545.6 H1823.6 A1 1 0 0 1 1822.6 544.6 V537.2 A1 1 0 0 1 1823.6 536.2 H1830.6 A1 1 0 0 1 1831.6 537.2 V538" fill="none" stroke="#666" stroke-width="1.1" stroke-linecap="round" stroke-linejoin="round" />
<rect x="1824.6" y="538.4" width="9.2" height="8.6" rx="1.2" fill="#fff" stroke="#555" stroke-width="1.1"/>
<path d="M1826.6 542.7 H1831.8 M1829.2 540.4 V545" fill="none" stroke="#333" stroke-width="1.1" stroke-linecap="round" stroke-linejoin="round" stroke-linecap="butt"/>
<path d="M1795 586.5 H1805 M1798.2 586.3 V585 A1.9 1.9 0 0 1 1802 585 V586.3" fill="none" stroke="#333" stroke-width="1.1" stroke-linecap="round" stroke-linejoin="round" />
<path d="M1795.8 588.2 V593.4 A2 2 0 0 0 1797.8 595.4 H1802.2 A2 2 0 0 0 1804.2 593.4 V588.2" fill="none" stroke="#777" stroke-width="1.1" stroke-linecap="round" stroke-linejoin="round" />
<path d="M1798.6 589.4 V592.8 M1801.6 589.4 V592.8" fill="none" stroke="#555" stroke-width="1" stroke-linecap="round" stroke-linejoin="round" />
<path d="M1824.4 593.6 H1823.6 A1 1 0 0 1 1822.6 592.6 V585.2 A1 1 0 0 1 1823.6 584.2 H1830.6 A1 1 0 0 1 1831.6 585.2 V586" fill="none" stroke="#666" stroke-width="1.1" stroke-linecap="round" stroke-linejoin="round" />
<rect x="1824.6" y="586.4" width="9.2" height="8.6" rx="1.2" fill="#fff" stroke="#555" stroke-width="1.1"/>
<path d="M1826.6 590.7 H1831.8 M1829.2 588.4 V593" fill="none" stroke="#333" stroke-width="1.1" stroke-linecap="round" stroke-linejoin="round" stroke-linecap="butt"/>
<path d="M1795 634.5 H1805 M1798.2 634.3 V633 A1.9 1.9 0 0 1 1802 633 V634.3" fill="none" stroke="#333" stroke-width="1.1" stroke-linecap="round" stroke-linejoin="round" />
<path d="M1795.8 636.2 V641.4 A2 2 0 0 0 1797.8 643.4 H1802.2 A2 2 0 0 0 1804.2 641.4 V636.2" fill="none" stroke="#777" stroke-width="1.1" stroke-linecap="round" stroke-linejoin="round" />
<path d="M1798.6 637.4 V640.8 M1801.6 637.4 V640.8" fill="none" stroke="#555" stroke-width="1" stroke-linecap="round" stroke-linejoin="round" />
<path d="M1824.4 641.6 H1823.6 A1 1 0 0 1 1822.6 640.6 V633.2 A1 1 0 0 1 1823.6 632.2 H1830.6 A1 1 0 0 1 1831.6 633.2 V634" fill="none" stroke="#666" stroke-width="1.1" stroke-linecap="round" stroke-linejoin="round" />
<rect x="1824.6" y="634.4" width="9.2" height="8.6" rx="1.2" fill="#fff" stroke="#555" stroke-width="1.1"/>
<path d="M1826.6 638.7 H1831.8 M1829.2 636.4 V641" fill="none" stroke="#333" stroke-width="1.1" stroke-linecap="round" stroke-linejoin="round" stroke-linecap="butt"/>
<path d="M1795 682.5 H1805 M1798.2 682.3 V681 A1.9 1.9 0 0 1 1802 681 V682.3" fill="none" stroke="#333" stroke-width="1.1" stroke-linecap="round" stroke-linejoin="round" />
<path d="M1795.8 684.2 V689.4 A2 2 0 0 0 1797.8 691.4 H1802.2 A2 2 0 0 0 1804.2 689.4 V684.2" fill="none" stroke="#777" stroke-width="1.1" stroke-linecap="round" stroke-linejoin="round" />
<path d="M1798.6 685.4 V688.8 M1801.6 685.4 V688.8" fill="none" stroke="#555" stroke-width="1" stroke-linecap="round" stroke-linejoin="round" />
<path d="M1824.4 689.6 H1823.6 A1 1 0 0 1 1822.6 688.6 V681.2 A1 1 0 0 1 1823.6 680.2 H1830.6 A1 1 0 0 1 1831.6 681.2 V682" fill="none" stroke="#666" stroke-width="1.1" stroke-linecap="round" stroke-linejoin="round" />
<rect x="1824.6" y="682.4" width="9.2" height="8.6" rx="1.2" fill="#fff" stroke="#555" stroke-width="1.1"/>
<path d="M1826.6 686.7 H1831.8 M1829.2 684.4 V689" fill="none" stroke="#333" stroke-width="1.1" stroke-linecap="round" stroke-linejoin="round" stroke-linecap="butt"/>
<path d="M1795 730.5 H1805 M1798.2 730.3 V729 A1.9 1.9 0 0 1 1802 729 V730.3" fill="none" stroke="#333" stroke-width="1.1" stroke-linecap="round" stroke-linejoin="round" />
<path d="M1795.8 732.2 V737.4 A2 2 0 0 0 1797.8 739.4 H1802.2 A2 2 0 0 0 1804.2 737.4 V732.2" fill="none" stroke="#777" stroke-width="1.1" stroke-linecap="round" stroke-linejoin="round" />
<path d="M1798.6 733.4 V736.8 M1801.6 733.4 V736.8" fill="none" stroke="#555" stroke-width="1" stroke-linecap="round" stroke-linejoin="round" />
<path d="M1824.4 737.6 H1823.6 A1 1 0 0 1 1822.6 736.6 V729.2 A1 1 0 0 1 1823.6 728.2 H1830.6 A1 1 0 0 1 1831.6 729.2 V730" fill="none" stroke="#666" stroke-width="1.1" stroke-linecap="round" stroke-linejoin="round" />
<rect x="1824.6" y="730.4" width="9.2" height="8.6" rx="1.2" fill="#fff" stroke="#555" stroke-width="1.1"/>
<path d="M1826.6 734.7 H1831.8 M1829.2 732.4 V737" fill="none" stroke="#333" stroke-width="1.1" stroke-linecap="round" stroke-linejoin="round" stroke-linecap="butt"/>
<circle cx="510" cy="855.7" r="6.6" fill="none" stroke="#333" stroke-width="1"/>
<text x="510" y="859.66" font-size="10.89" fill="#333" font-weight="normal" text-anchor="middle" font-family="Liberation Sans, Noto Sans CJK SC, sans-serif">?</text>
<path d="M441 898.6 L446.5 904.6 L452 898.6" fill="none" stroke="#fd8b40" stroke-width="1.3" stroke-linecap="round" stroke-linejoin="round" />
<circle cx="822" cy="903.6" r="5.8" fill="#fd8b40" stroke="#fd8b40" stroke-width="0"/>
<path d="M819 903.6 H825 M822 900.6 V906.6" fill="none" stroke="#fff" stroke-width="1.4" stroke-linecap="round" stroke-linejoin="round" stroke-linecap="butt"/>
<circle cx="982" cy="904" r="6.6" fill="none" stroke="#333" stroke-width="1"/>
<text x="982" y="907.96" font-size="10.89" fill="#333" font-weight="normal" text-anchor="middle" font-family="Liberation Sans, Noto Sans CJK SC, sans-serif">?</text>
<circle cx="417.5" cy="940.5" r="5.4" fill="none" stroke="#444" stroke-width="0.9"/>
<text x="417.5" y="943.74" font-size="8.91" fill="#444" font-weight="normal" text-anchor="middle" font-family="Liberation Sans, Noto Sans CJK SC, sans-serif">?</text>
<circle cx="537.5" cy="940.5" r="5.4" fill="none" stroke="#444" stroke-width="0.9"/>
<text x="537.5" y="943.74" font-size="8.91" fill="#444" font-weight="normal" text-anchor="middle" font-family="Liberation Sans, Noto Sans CJK SC, sans-serif">?</text>
<circle cx="1222.7" cy="939.4" r="7" fill="none" stroke="#aaa" stroke-width="1"/>
<path d="M1219.2 937.6 H1226.2 L1225.8 943 H1219.6 Z M1220.8 937.6 C1220.8 935 1224.6 935 1224.6 937.6" fill="none" stroke="#aaa" stroke-width="0.9" stroke-linecap="round" stroke-linejoin="round" />
<path d="M1372 938.2 L1375 941.2 L1379.6 935.6" fill="none" stroke="#fff" stroke-width="1.5" stroke-linecap="round" stroke-linejoin="round" />
<path d="M1680 941.2 L1684.4 936.4 L1688.8 941.2" fill="none" stroke="#fd8b40" stroke-width="1.3" stroke-linecap="round" stroke-linejoin="round" />
<path d="M1844.6 941.2 L1849.1 936.4 L1853.6 941.2" fill="none" stroke="#fff" stroke-width="1.5" stroke-linecap="round" stroke-linejoin="round" />
<rect x="1895" y="246" width="12" height="16" rx="2" fill="none" stroke="#665" stroke-width="1.2"/>
<path d="M1895.2 287 L1901 285.6 V301 C1897.4 299.4 1895.2 296.4 1895.2 292 Z" fill="none" stroke="#445" stroke-width="1.2" stroke-linecap="round" stroke-linejoin="round" />
<rect x="1895" y="321" width="12" height="16" rx="1" fill="none" stroke="#445" stroke-width="1.2"/>
<circle cx="1903" cy="365" r="8" fill="none" stroke="#445" stroke-width="1.2"/>
<circle cx="1903" cy="401" r="8" fill="none" stroke="#445" stroke-width="1.2"/>
<rect x="1895" y="429" width="12" height="16" rx="1" fill="none" stroke="#445" stroke-width="1.2"/>
<path d="M1901 470 C1897 470 1894 474 1894 478" fill="none" stroke="#445" stroke-width="1.2" stroke-linecap="round" stroke-linejoin="round" />
<rect x="1894.6" y="502" width="12" height="13" rx="1.5" fill="none" stroke="#445" stroke-width="1.2"/>
<circle cx="1896.6" cy="517.4" r="1.2" fill="none" stroke="#445" stroke-width="1"/>
<rect x="1895" y="542" width="12" height="17" rx="1" fill="none" stroke="#fff" stroke-width="1.3"/>
<path d="M1897.6 556 L1901 552.6 M1897.6 553 V556 H1900" fill="none" stroke="#fff" stroke-width="1.1" stroke-linecap="round" stroke-linejoin="round" /></svg>
</body></html>
